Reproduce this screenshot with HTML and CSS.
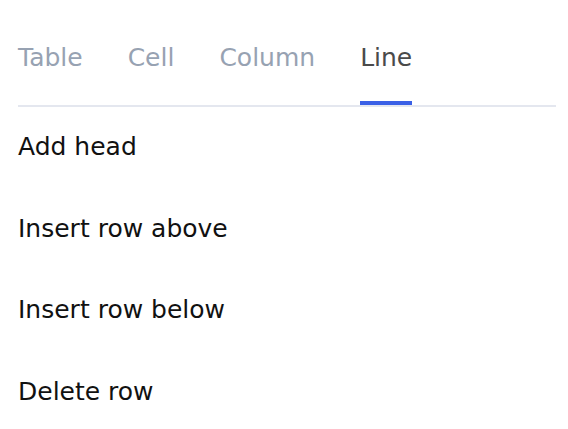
FILE: index.html
```html
<!DOCTYPE html>
<html>
<head>
<meta charset="utf-8">
<link rel="stylesheet" href="styles.css">
</head>
<body>
<div class="panel">
  <div class="tabs">
    <div class="tab">Table</div>
    <div class="tab">Cell</div>
    <div class="tab">Column</div>
    <div class="tab active">Line</div>
  </div>
  <ul class="menu">
    <li class="item">Add head</li>
    <li class="item">Insert row above</li>
    <li class="item">Insert row below</li>
    <li class="item">Delete row</li>
  </ul>
</div>
</body>
</html>
```

FILE: styles.css
```css
html, body {
  margin: 0;
  padding: 0;
  background: #ffffff;
}
body {
  font-family: "DejaVu Sans", "Noto Sans", sans-serif;
}
.panel {
  padding: 0 12px 0 18px;
}
.tabs {
  display: flex;
  gap: 45px;
  border-bottom: 2px solid #e4e7ef;
}
.tab {
  font-size: 25px;
  color: #97a2b2;
  padding-top: 41px;
  height: 60px;
  line-height: 34px;
  border-bottom: 4px solid transparent;
}
.tab.active {
  color: #4a4a4a;
  border-bottom-color: #3a60e6;
}
.menu {
  list-style: none;
  margin: 0;
  padding: 0;
}
.item {
  font-size: 25px;
  color: #111111;
  height: 81.5px;
  line-height: 80px;
}
```
